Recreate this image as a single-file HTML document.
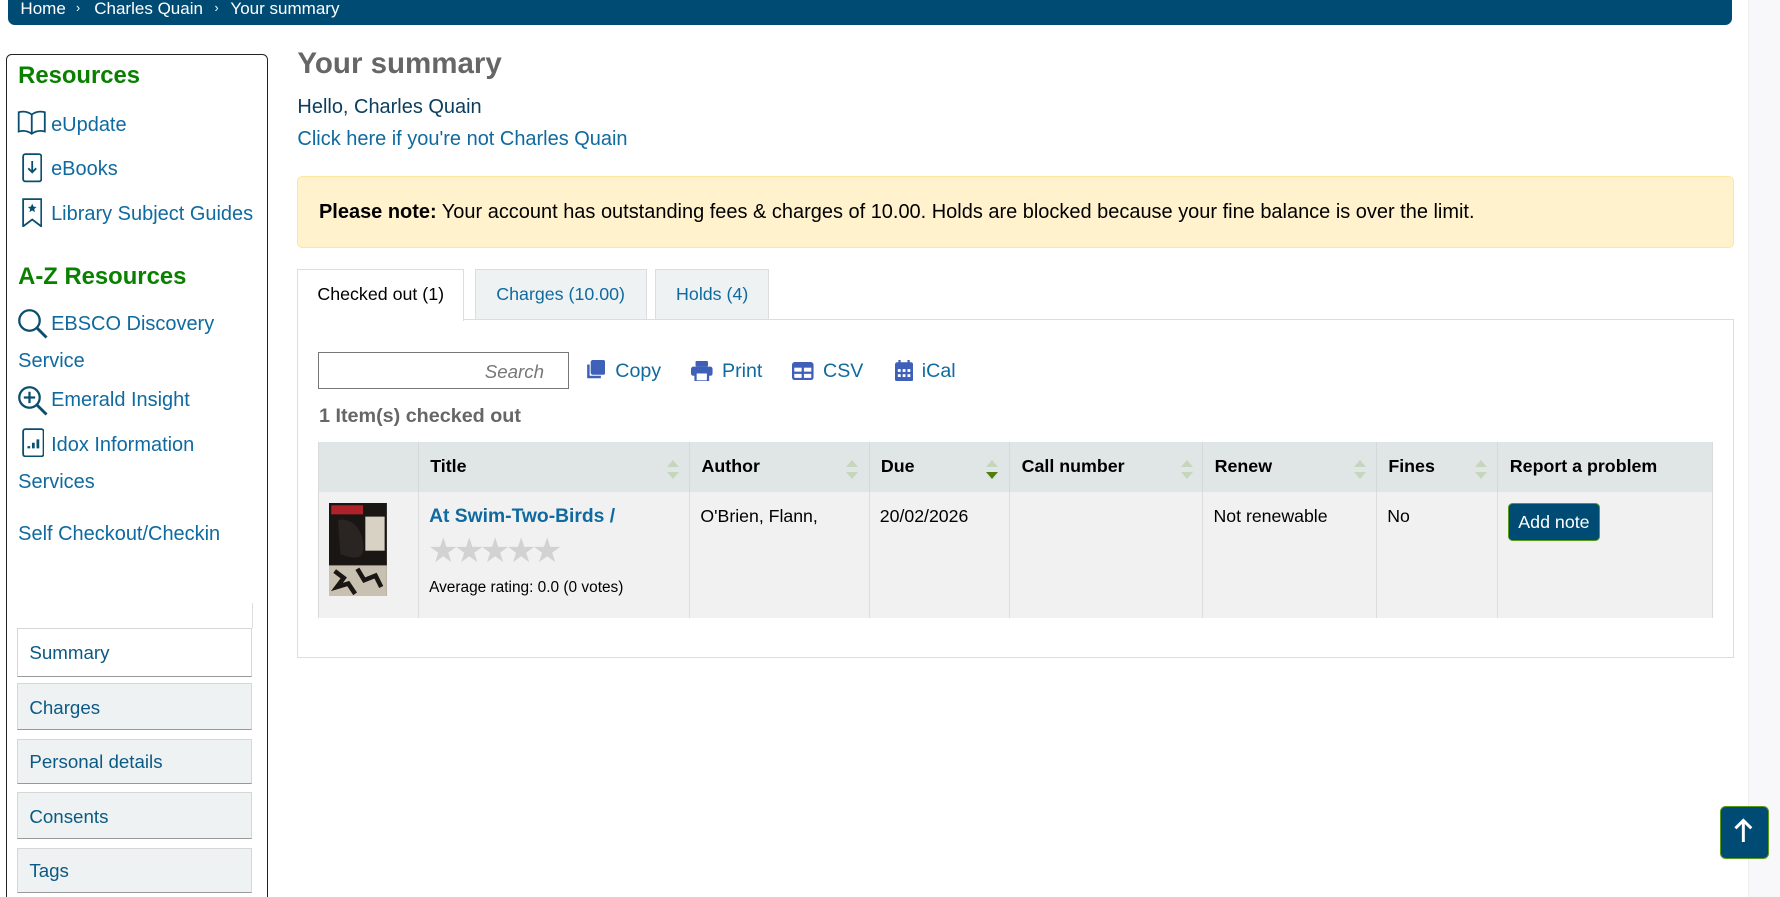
<!DOCTYPE html>
<html><head><meta charset="utf-8">
<style>
html{zoom:1.13520;overflow:hidden;height:790px}
body{margin:0;width:1568px;height:790px;overflow:hidden;position:relative;background:#fff;font-family:"Liberation Sans",Arial,sans-serif;font-size:16px;color:#000}
.a{position:absolute;white-space:nowrap}
.lnk{color:#0f6aa0}
.sl{font-size:17.6px}
.bc{position:absolute;left:7px;top:-6px;width:1519px;height:28px;background:#004b73;border-radius:0 0 6px 6px}
.bc span{position:absolute;top:5px;color:#fff;font-size:15px}
.side{position:absolute;left:5px;top:48px;width:229px;height:760px;border:1px solid #222;border-radius:5px}
.h{color:#0a8000;font-weight:bold;font-size:21px}
.nav{position:absolute;left:15px;width:207px;border:1px solid #d6d6d6;border-bottom:1px solid #999;background:#eef2f2;color:#0b5a85;font-size:16.5px;box-sizing:border-box;padding-left:10px}
.th{position:absolute;top:389px;height:44px;background:#e0e6e6;border-right:1px solid #d4d8d8;box-sizing:border-box;font-weight:bold;font-size:15.7px;padding:13px 0 0 10px}
.td{position:absolute;top:433px;height:111px;background:#f1f1f1;border-right:1px solid #ddd;box-sizing:border-box;font-size:15.6px;padding:13px 0 0 9px}
.sa{position:absolute;width:0;height:0;border-left:6px solid transparent;border-right:6px solid transparent}
.star{color:#d2d2d2;font-size:30px;letter-spacing:-4px}
</style></head><body>
<div class="bc"><span style="left:11px">Home</span><span style="left:60px;font-size:11px;top:7px">›</span><span style="left:76px">Charles Quain</span><span style="left:182px;font-size:11px;top:7px">›</span><span style="left:196px">Your summary</span></div>
<div style="position:absolute;left:1540px;top:0;width:28px;height:790px;background:#f8f8fa;border-left:1px solid #eee"></div>

<div class="side"></div>
<div class="a h" style="left:16px;top:55px">Resources</div>
<svg class="a" style="left:15px;top:97px" width="26" height="22" viewBox="0 0 26 22" fill="none" stroke="#0b4f70" stroke-width="1.6"><path d="M13 4C9 1 5 1 1.5 2v17c3.5-1 7.5-1 11.5 2 4-3 8-3 11.5-2V2C21 1 17 1 13 4zM13 4v17"/></svg>
<div class="a lnk sl" style="left:45px;top:100px">eUpdate</div>
<svg class="a" style="left:19px;top:135px" width="18" height="26" viewBox="0 0 18 26" fill="none" stroke="#0b4f70" stroke-width="1.6"><rect x="1" y="1" width="16" height="24" rx="2"/><path d="M9 7v10M5.5 13.5 9 17l3.5-3.5"/></svg>
<div class="a lnk sl" style="left:45px;top:139px">eBooks</div>
<svg class="a" style="left:19px;top:174px" width="18" height="26" viewBox="0 0 18 26" fill="none" stroke="#0b4f70" stroke-width="1.6"><path d="M1 1h16v24l-8-6-8 6z"/><path d="M9 5l1.2 2.6 2.6.3-2 1.8.6 2.7L9 11l-2.4 1.4.6-2.7-2-1.8 2.6-.3z" fill="#0b4f70" stroke="none"/></svg>
<div class="a lnk sl" style="left:45px;top:179px">Library Subject Guides</div>
<div class="a h" style="left:16px;top:232px">A-Z Resources</div>
<svg class="a" style="left:15px;top:271px" width="28" height="28" viewBox="0 0 28 28" fill="none" stroke="#0b4f70" stroke-width="2"><circle cx="11" cy="11" r="9"/><path d="M17.5 17.5 26 26" stroke-width="2.6"/></svg>
<div class="a lnk sl" style="left:45px;top:276px">EBSCO Discovery</div>
<div class="a lnk sl" style="left:16px;top:308px">Service</div>
<svg class="a" style="left:15px;top:339px" width="28" height="28" viewBox="0 0 28 28" fill="none" stroke="#0b4f70" stroke-width="2"><circle cx="11" cy="11" r="9"/><path d="M17.5 17.5 26 26" stroke-width="2.6"/><path d="M11 6v10M6 11h10"/></svg>
<div class="a lnk sl" style="left:45px;top:343px">Emerald Insight</div>
<svg class="a" style="left:19px;top:377px" width="20" height="26" viewBox="0 0 20 26" fill="none" stroke="#0b4f70" stroke-width="1.6"><rect x="1" y="1" width="18" height="24" rx="2"/><path d="M6 18v-2M10 18v-5M14 18v-8" stroke-width="2.4"/></svg>
<div class="a lnk sl" style="left:45px;top:382px">Idox Information</div>
<div class="a lnk sl" style="left:16px;top:415px">Services</div>
<div class="a lnk sl" style="left:16px;top:461px">Self Checkout/Checkin</div>

<div style="position:absolute;left:15px;top:531px;width:207px;height:22px;border-right:1px solid #ddd"></div>
<div class="nav" style="top:553px;height:43px;background:#fff;padding-top:12px">Summary</div>
<div class="nav" style="top:602px;height:41px;padding-top:11px">Charges</div>
<div class="nav" style="top:651px;height:40px;padding-top:10px">Personal details</div>
<div class="nav" style="top:698px;height:41px;padding-top:11px">Consents</div>
<div class="nav" style="top:747px;height:40px;padding-top:10px">Tags</div>

<div class="a" style="left:262px;top:41px;font-size:26px;font-weight:bold;color:#666">Your summary</div>
<div class="a sl" style="left:262px;top:85px;color:#0b3e5c">Hello, Charles Quain</div>
<div class="a lnk sl" style="left:262px;top:113px">Click here if you're not Charles Quain</div>
<div style="position:absolute;left:262px;top:155px;width:1264px;height:62px;background:#fff2cc;border:1px solid #fde6a0;border-radius:5px"></div>
<div class="a sl" style="left:281px;top:177px"><b>Please note:</b> Your account has outstanding fees &amp; charges of 10.00. Holds are blocked because your fine balance is over the limit.</div>

<div style="position:absolute;left:262px;top:281px;width:1264px;height:297px;border:1px solid #ddd"></div>
<div class="a" style="left:262px;top:237px;width:145px;height:45px;background:#fff;border:1px solid #ddd;border-bottom:none;text-align:center;line-height:43px;font-size:15.7px">Checked out (1)</div>
<div class="a lnk" style="left:418px;top:237px;width:150px;height:43px;background:#eef2f2;border:1px solid #ddd;text-align:center;line-height:43px;font-size:15.7px">Charges (10.00)</div>
<div class="a lnk" style="left:577px;top:237px;width:99px;height:43px;background:#eef2f2;border:1px solid #ddd;text-align:center;line-height:43px;font-size:15.7px">Holds (4)</div>

<div style="position:absolute;left:280px;top:310px;width:221px;height:33px;border:1px solid #777;box-sizing:border-box"></div>
<div class="a" style="left:427px;top:318px;color:#777;font-style:italic;font-size:16.5px">Search</div>
<svg class="a" style="left:515px;top:317px" width="18" height="18" viewBox="0 0 18 18"><rect x="5" y="0" width="13" height="13" rx="2" fill="#3e60b8"/><path d="M3 4v11h11" fill="none" stroke="#3e60b8" stroke-width="2.2"/></svg>
<div class="a lnk" style="left:542px;top:317px;font-size:17.3px">Copy</div>
<svg class="a" style="left:609px;top:318px" width="19" height="18" viewBox="0 0 19 18" fill="#3e60b8"><rect x="4" y="0" width="11" height="5" rx="1"/><rect x="0" y="5" width="19" height="8" rx="2"/><rect x="4" y="10" width="11" height="8" fill="#fff" stroke="#3e60b8" stroke-width="2"/></svg>
<div class="a lnk" style="left:636px;top:317px;font-size:17.3px">Print</div>
<svg class="a" style="left:698px;top:319px" width="19" height="16" viewBox="0 0 19 16"><rect x="1" y="1" width="17" height="14" rx="1.5" fill="none" stroke="#3e60b8" stroke-width="2"/><rect x="1" y="1" width="17" height="4" fill="#3e60b8"/><path d="M9.5 4v11M1 9.5h17" stroke="#3e60b8" stroke-width="2"/></svg>
<div class="a lnk" style="left:725px;top:317px;font-size:17.3px">CSV</div>
<svg class="a" style="left:788px;top:317px" width="16" height="19" viewBox="0 0 16 19" fill="#3e60b8"><rect x="3" y="0" width="2" height="4"/><rect x="11" y="0" width="2" height="4"/><rect x="0" y="2" width="16" height="17" rx="2"/><g fill="#fff"><rect x="2.5" y="8" width="2.5" height="2.5"/><rect x="6.75" y="8" width="2.5" height="2.5"/><rect x="11" y="8" width="2.5" height="2.5"/><rect x="2.5" y="12.5" width="2.5" height="2.5"/><rect x="6.75" y="12.5" width="2.5" height="2.5"/><rect x="11" y="12.5" width="2.5" height="2.5"/></g></svg>
<div class="a lnk" style="left:812px;top:317px;font-size:17.3px">iCal</div>
<div class="a" style="left:281px;top:357px;font-weight:bold;color:#666;font-size:17.4px">1 Item(s) checked out</div>

<div style="position:absolute;left:280px;top:389px;width:1229px;height:155px;border:1px solid #dadada;box-sizing:border-box"></div>
<div class="th" style="left:281px;width:88px"></div>
<div class="th" style="left:369px;width:239px">Title</div>
<div class="th" style="left:608px;width:158px">Author</div>
<div class="th" style="left:766px;width:124px">Due</div>
<div class="th" style="left:890px;width:170px">Call number</div>
<div class="th" style="left:1060px;width:153px">Renew</div>
<div class="th" style="left:1213px;width:107px">Fines</div>
<div class="th" style="left:1320px;width:188px;border-right:none">Report a problem</div>
<div style="position:absolute;left:281px;top:433px;width:1227px;height:1px;background:#d4d8d8"></div>
<div class="sa" style="left:588px;top:405px;border-bottom:7px solid #c5d6bd"></div><div class="sa" style="left:588px;top:416px;border-top:7px solid #c5d6bd"></div>
<div class="sa" style="left:745px;top:405px;border-bottom:7px solid #c5d6bd"></div><div class="sa" style="left:745px;top:416px;border-top:7px solid #c5d6bd"></div>
<div class="sa" style="left:869px;top:405px;border-bottom:7px solid #c5d6bd"></div><div class="sa" style="left:869px;top:416px;border-top:7px solid #4f7f10"></div>
<div class="sa" style="left:1040px;top:405px;border-bottom:7px solid #c5d6bd"></div><div class="sa" style="left:1040px;top:416px;border-top:7px solid #c5d6bd"></div>
<div class="sa" style="left:1193px;top:405px;border-bottom:7px solid #c5d6bd"></div><div class="sa" style="left:1193px;top:416px;border-top:7px solid #c5d6bd"></div>
<div class="sa" style="left:1299px;top:405px;border-bottom:7px solid #c5d6bd"></div><div class="sa" style="left:1299px;top:416px;border-top:7px solid #c5d6bd"></div>

<div class="td" style="left:281px;width:88px"></div>
<div class="td" style="left:369px;width:239px"></div>
<div class="td" style="left:608px;width:158px">O'Brien, Flann,</div>
<div class="td" style="left:766px;width:124px">20/02/2026</div>
<div class="td" style="left:890px;width:170px"></div>
<div class="td" style="left:1060px;width:153px">Not renewable</div>
<div class="td" style="left:1213px;width:107px">No</div>
<div class="td" style="left:1320px;width:188px;border-right:none"></div>
<svg class="a" style="left:290px;top:443px" width="51" height="82" viewBox="0 0 51 82"><rect width="51" height="82" fill="#1a1614"/><rect x="2" y="2" width="28" height="8" fill="#b0222a"/><rect x="32" y="12" width="17" height="30" fill="#d8d2c4"/><path d="M0 55h51v27H0z" fill="#c8c0b0"/><path d="M5 60l8 6-6 8 10-3 6 9M25 58l6 10 10-4 5 10" stroke="#1a1614" stroke-width="4" fill="none"/><path d="M8 15c10-2 20 5 22 20s-6 15-20 10" fill="#2a2522"/></svg>
<div class="a" style="left:378px;top:446px;color:#0f6aa0;font-weight:bold;font-size:17px">At Swim-Two-Birds /</div>
<div class="a star" style="left:377px;top:468px">★★★★★</div>
<div class="a" style="left:378px;top:510px;font-size:13.6px">Average rating: 0.0 (0 votes)</div>
<div class="a" style="left:1328px;top:443px;width:80px;height:32px;background:#004b73;border:1px solid #5a9a1a;border-radius:4px;color:#fff;font-size:15.7px;text-align:center;line-height:32px">Add note</div>

<div class="a" style="left:1515px;top:710px;width:42px;height:45px;background:#004b73;border:1px solid #5a9a1a;border-radius:5px"></div>
<svg class="a" style="left:1526px;top:720px" width="20" height="24" viewBox="0 0 20 24" fill="none" stroke="#fff" stroke-width="2.6"><path d="M10 22V3M3 10l7-7 7 7"/></svg>
</body></html>
